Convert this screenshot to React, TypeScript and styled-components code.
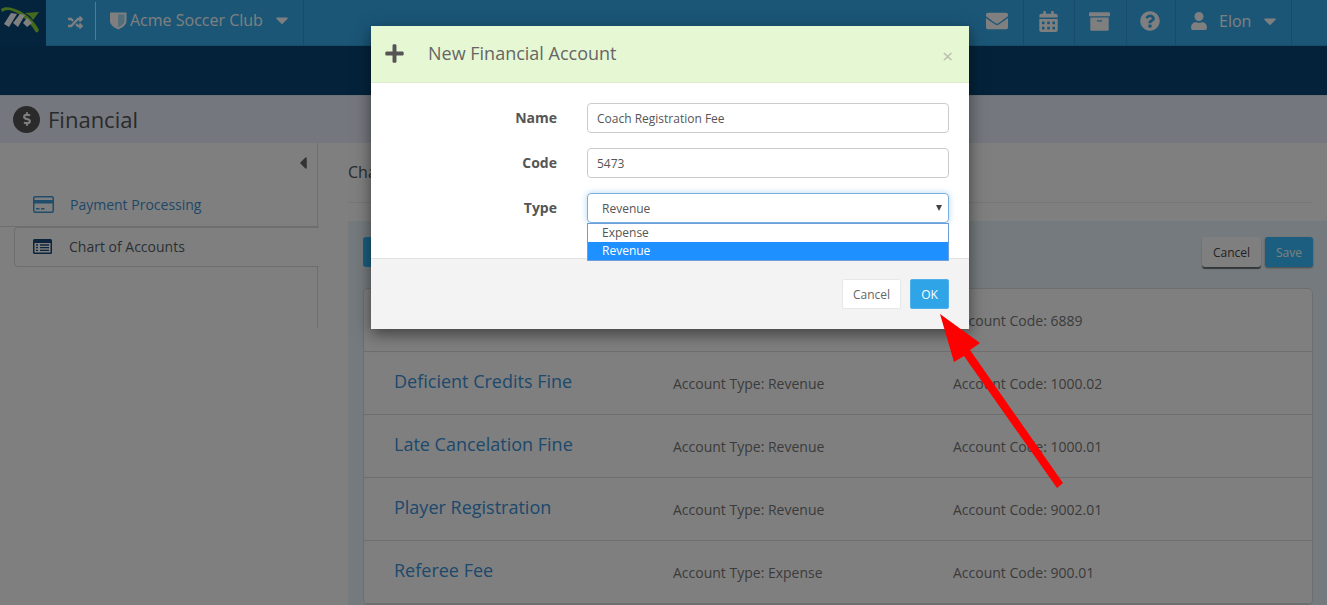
import React from 'react';
import styled, { createGlobalStyle } from 'styled-components';
import {
  FaArchive,
  FaCalendarAlt,
  FaCaretDown,
  FaCaretLeft,
  FaDollarSign,
  FaEnvelope,
  FaPlus,
  FaQuestionCircle,
  FaRandom,
  FaUser,
} from 'react-icons/fa';

const accounts = [
  { name: '', type: '', code: '6889' },
  { name: 'Deficient Credits Fine', type: 'Revenue', code: '1000.02' },
  { name: 'Late Cancelation Fine', type: 'Revenue', code: '1000.01' },
  { name: 'Player Registration', type: 'Revenue', code: '9002.01' },
  { name: 'Referee Fee', type: 'Expense', code: '900.01' },
];

const App = (): React.JSX.Element => {
  return (
    <Page>
      <GlobalStyle />
      <TopBar>
        <LogoBox>
          <svg width="46" height="46" viewBox="0 0 46 46">
            <path d="M1 9 C4 7 8 7 12 8 C24 11 34 20 39 30 C38 33 36 33 35 31 C29 21 19 12 9 10 C6 9.5 3 11 2 12 Z" fill="#8dd43a" />
            <path d="M4 24 L11 13 L17 14 L9 27 Z M13 23 L20 14 L25 15 L18 27 Z" fill="#fff" />
            <path d="M23 23 L27 18 L32 23 L27 27 Z" fill="#fff" />
            <path d="M25 13 L39 12 L33 20 L30 16 Z" fill="#8dd43a" />
          </svg>
        </LogoBox>
        <ShuffleButton>
          <FaRandom size={15} />
        </ShuffleButton>
        <ClubMenu>
          <svg width="17" height="19" viewBox="0 0 17 19">
            <path d="M0 1.5 H16.5 V10 C16.5 14 12 17 8.2 18.5 C4.5 17 0 14 0 10 Z" fill="#fff" />
            <path d="M8.2 3.5 H14.5 V10 C14.5 12.5 11 15 8.2 16.2 Z" fill="#36adee" opacity="0.45" />
          </svg>
          <ClubName>Acme Soccer Club</ClubName>
          <FaCaretDown size={20} />
        </ClubMenu>
        <NavSpacer />
        <NavIcon $width={52}>
          <FaEnvelope size={22} />
        </NavIcon>
        <NavIcon $width={51}>
          <FaCalendarAlt size={21} />
        </NavIcon>
        <NavIcon $width={52}>
          <FaArchive size={21} />
        </NavIcon>
        <NavIcon $width={49}>
          <FaQuestionCircle size={20} />
        </NavIcon>
        <UserMenu>
          <FaUser size={18} />
          <UserName>Elon</UserName>
          <FaCaretDown size={20} />
        </UserMenu>
      </TopBar>
      <Band />
      <PageHeader>
        <HeaderBadge>
          <FaDollarSign size={14} />
        </HeaderBadge>
        <PageTitle>Financial</PageTitle>
      </PageHeader>
      <Main>
        <Sidebar>
          <CollapseRow>
            <FaCaretLeft size={20} />
          </CollapseRow>
          <SideLink>
            <svg width="21" height="17" viewBox="0 0 21 17">
              <rect x="0.75" y="0.75" width="19.5" height="15.5" rx="1.5" fill="none" stroke="#3f9ad6" strokeWidth="1.5" />
              <rect x="1" y="4" width="19" height="3.5" fill="#3f9ad6" />
              <rect x="3" y="12" width="3.5" height="1.5" fill="#3f9ad6" />
              <rect x="8" y="12" width="3.5" height="1.5" fill="#3f9ad6" />
            </svg>
            <SideLabel $active={false}>Payment Processing</SideLabel>
          </SideLink>
          <SideActive>
            <svg width="19" height="15" viewBox="0 0 19 15">
              <rect width="19" height="15" rx="1.5" fill="#1b4a78" />
              <rect x="1.5" y="4" width="16" height="9.5" fill="#fff" />
              <path d="M3 6 H5 M7 6 H16 M3 8.7 H5 M7 8.7 H16 M3 11.4 H5 M7 11.4 H16" stroke="#1b4a78" strokeWidth="1.3" />
            </svg>
            <SideLabel $active>Chart of Accounts</SideLabel>
          </SideActive>
          <SideTail />
        </Sidebar>
        <Content>
          <ContentTitle>Chart of Accounts</ContentTitle>
          <Panel>
            <PanelToolbar>
              <AddButton>Add Account</AddButton>
              <ToolbarActions>
                <GreyButton>Cancel</GreyButton>
                <BlueButton>Save</BlueButton>
              </ToolbarActions>
            </PanelToolbar>
            <AccountList>
              {accounts.map((account) => (
                <AccountRow key={account.code}>
                  <AccountName>{account.name}</AccountName>
                  <AccountMeta>{account.type && `Account Type: ${account.type}`}</AccountMeta>
                  <AccountMeta>Account Code: {account.code}</AccountMeta>
                </AccountRow>
              ))}
            </AccountList>
          </Panel>
        </Content>
      </Main>

      <Backdrop />
      <Modal>
        <ModalHeader>
          <FaPlus size={21} />
          <ModalTitle>New Financial Account</ModalTitle>
          <CloseButton>×</CloseButton>
        </ModalHeader>
        <ModalBody>
          <FieldLabel>Name</FieldLabel>
          <TextInput>Coach Registration Fee</TextInput>
          <FieldLabel>Code</FieldLabel>
          <TextInput>5473</TextInput>
          <FieldLabel>Type</FieldLabel>
          <SelectWrap>
            <SelectBox>
              <span>Revenue</span>
              <SelectArrow />
            </SelectBox>
            <OptionList>
              <Option $selected={false}>Expense</Option>
              <Option $selected>Revenue</Option>
            </OptionList>
          </SelectWrap>
        </ModalBody>
        <ModalFooter>
          <CancelButton>Cancel</CancelButton>
          <OkButton>OK</OkButton>
        </ModalFooter>
      </Modal>

      <ArrowOverlay width="130" height="180" viewBox="0 0 130 180">
        <path d="M0 0 L40 29 L30 36 L123 169 L117 174 L24 42 L14 48 Z" fill="#fe0000" />
      </ArrowOverlay>
    </Page>
  );
};

const GlobalStyle = createGlobalStyle`
  html, body {
    margin: 0;
    height: 100%;
    overflow: hidden;
    background: #fff;
    font-family: 'Open Sans', 'Liberation Sans', sans-serif;
  }
  * {
    box-sizing: border-box;
  }
`;

const Page = styled.div`
  position: relative;
  width: 1327px;
  height: 605px;
  overflow: hidden;
  background: #fff;
`;

const TopBar = styled.header`
  height: 46px;
  display: flex;
  align-items: stretch;
  background: #36adee;
  border-bottom: 1px solid #2f9bd6;
  color: #fff;
`;

const LogoBox = styled.div`
  width: 46px;
  margin-bottom: -1px;
  background: #08477a;
`;

const ShuffleButton = styled.div`
  width: 50px;
  margin: 2px 0 5px;
  display: flex;
  align-items: center;
  justify-content: center;
  padding-top: 2px;
  padding-left: 9px;
  border-right: 1px solid rgba(255, 255, 255, 0.75);
`;

const ClubMenu = styled.div`
  width: 208px;
  display: flex;
  align-items: center;
  padding-left: 14px;
  padding-bottom: 5px;
  border-right: 1px solid #2f9bd6;
  svg:last-child {
    margin-left: 9px;
  }
`;

const ClubName = styled.span`
  margin-left: 3px;
  font-size: 16px;
  line-height: 1;
`;

const NavSpacer = styled.div`
  flex: 1;
`;

const NavIcon = styled.div<{ $width: number }>`
  width: ${(p) => p.$width}px;
  display: flex;
  align-items: center;
  justify-content: center;
  padding: 0 2px 3px 0;
  border-right: 1px solid #2f9bd6;
`;

const UserMenu = styled.div`
  width: 116px;
  margin-right: 35px;
  display: flex;
  align-items: center;
  padding-left: 14px;
  padding-bottom: 3px;
  border-right: 1px solid #2f9bd6;
`;

const UserName = styled.span`
  margin: 0 9px 0 11px;
  font-size: 16px;
`;

const Band = styled.div`
  height: 49px;
  background: #084676;
`;

const PageHeader = styled.div`
  height: 48px;
  display: flex;
  align-items: center;
  padding-left: 13px;
  background: #e8eefa;
  border-top: 1px solid #dde3ee;
`;

const HeaderBadge = styled.div`
  width: 27px;
  height: 27px;
  margin-bottom: 1px;
  border-radius: 50%;
  display: flex;
  align-items: center;
  justify-content: center;
  background: #555;
  color: #fff;
`;

const PageTitle = styled.h1`
  margin: 0 0 2px 8px;
  font-size: 22px;
  font-weight: 400;
  color: #555;
`;

const Main = styled.div`
  display: flex;
  background: #fff;
`;

const Sidebar = styled.aside`
  width: 318px;
  flex-shrink: 0;
  display: flex;
  flex-direction: column;
`;

const CollapseRow = styled.div`
  height: 42px;
  display: flex;
  justify-content: flex-end;
  padding: 10px 4px 0 0;
  color: #666;
  border-right: 1px solid #ddd;
`;

const SideLink = styled.div`
  height: 42px;
  display: flex;
  align-items: center;
  padding: 0 0 2px 33px;
  border-right: 1px solid #ddd;
  border-bottom: 1px solid #ddd;
`;

const SideActive = styled.div`
  height: 40px;
  margin-left: 14px;
  width: 305px;
  display: flex;
  align-items: center;
  padding: 0 0 2px 18px;
  background: #fff;
  border: 1px solid #ddd;
  border-right: 0;
  border-radius: 4px 0 0 4px;
`;

const SideLabel = styled.span<{ $active: boolean }>`
  margin-left: ${(p) => (p.$active ? '17px' : '16px')};
  font-size: 14px;
  color: ${(p) => (p.$active ? '#555f6b' : '#3f8fcf')};
`;

const SideTail = styled.div`
  height: 61px;
  border-right: 1px solid #ddd;
`;

const Content = styled.section`
  flex: 1;
  padding: 0 14px 0 30px;
`;

const ContentTitle = styled.h2`
  margin: 0 0 18px;
  height: 60px;
  padding-top: 18px;
  font-size: 16px;
  font-weight: 400;
  color: #555;
  border-bottom: 1px solid #eee;
`;

const Panel = styled.div`
  margin-right: -14px;
  padding: 16px 14px 0 15px;
  background: #e9f5fa;
`;

const PanelToolbar = styled.div`
  height: 51px;
  display: flex;
  justify-content: space-between;
  align-items: flex-start;
`;

const AddButton = styled.div`
  width: 120px;
  height: 30px;
  display: flex;
  align-items: center;
  justify-content: center;
  background: #37bcff;
  border-radius: 3px;
  color: #fff;
  font-size: 12px;
`;

const ToolbarActions = styled.div`
  display: flex;
  gap: 4px;
`;

const GreyButton = styled.div`
  width: 59px;
  height: 30px;
  display: flex;
  align-items: center;
  justify-content: center;
  border-radius: 3px;
  background: #fff;
  color: #444;
  font-size: 12px;
  box-shadow: 0 2px 1px rgba(0, 0, 0, 0.55);
`;

const BlueButton = styled(GreyButton)`
  width: 48px;
  background: #37bcff;
  color: #fff;
  box-shadow: 0 1px 2px rgba(0, 0, 0, 0.4);
`;

const AccountList = styled.div`
  background: #fff;
  border: 1px solid #ddd;
  border-radius: 5px;
`;

const AccountRow = styled.div`
  height: 63px;
  display: grid;
  grid-template-columns: 279px 280px 1fr;
  align-items: center;
  padding: 0 0 0 30px;
  border-bottom: 1px solid #ddd;
`;

const AccountName = styled.a`
  margin-bottom: 4px;
  font-size: 18px;
  color: #3a92d8;
`;

const AccountMeta = styled.span`
  font-size: 14px;
  color: #777;
`;

const Backdrop = styled.div`
  position: absolute;
  inset: 0;
  background: rgba(0, 0, 0, 0.5);
`;

const Modal = styled.div`
  position: absolute;
  left: 371px;
  top: 26px;
  width: 598px;
  height: 303px;
  display: flex;
  flex-direction: column;
  background: #fff;
  box-shadow: 0 5px 15px rgba(0, 0, 0, 0.5);
`;

const ModalHeader = styled.div`
  position: relative;
  height: 57px;
  display: flex;
  align-items: center;
  padding: 0 0 2px 13px;
  background: #e6f7d4;
  border-bottom: 1px solid #dcedc9;
  color: #555;
`;

const ModalTitle = styled.h3`
  margin: 0 0 0 23px;
  font-size: 18px;
  font-weight: 400;
  color: #666;
`;

const CloseButton = styled.span`
  position: absolute;
  right: 16px;
  top: 21px;
  font-size: 19px;
  line-height: 1;
  color: #b5bdae;
`;

const ModalBody = styled.div`
  height: 175px;
  display: grid;
  grid-template-columns: 186px 362px;
  grid-auto-rows: 30px;
  column-gap: 30px;
  row-gap: 15px;
  padding-top: 20px;
`;

const FieldLabel = styled.label`
  text-align: right;
  line-height: 30px;
  font-size: 14px;
  font-weight: 700;
  color: #555;
`;

const TextInput = styled.div`
  height: 30px;
  padding: 0 9px;
  line-height: 29px;
  font-size: 12px;
  color: #555;
  border: 1px solid #ccc;
  border-radius: 4px;
`;

const SelectWrap = styled.div`
  position: relative;
`;

const SelectBox = styled.div`
  height: 30px;
  display: flex;
  align-items: center;
  justify-content: space-between;
  padding: 0 6px 0 14px;
  font-size: 12px;
  color: #555;
  border: 1px solid #7aaedb;
  border-radius: 4px;
  box-shadow: 0 0 6px rgba(102, 175, 233, 0.5);
`;

const SelectArrow = styled.span`
  width: 0;
  height: 0;
  border-left: 3.5px solid transparent;
  border-right: 3.5px solid transparent;
  border-top: 6px solid #444;
`;

const OptionList = styled.div`
  position: absolute;
  left: 0;
  right: 0;
  top: 30px;
  z-index: 2;
  background: #fff;
  border: 1px solid #6e9fdc;
`;

const Option = styled.div<{ $selected: boolean }>`
  height: 18px;
  padding-left: 14px;
  line-height: 17px;
  font-size: 12px;
  color: ${(p) => (p.$selected ? '#fff' : '#555')};
  background: ${(p) => (p.$selected ? '#1e90ff' : '#fff')};
`;

const ModalFooter = styled.div`
  flex: 1;
  display: flex;
  justify-content: flex-end;
  align-items: flex-start;
  gap: 9px;
  padding: 20px 20px 0 0;
  background: #f3f3f3;
  border-top: 1px solid #e2e2e2;
`;

const CancelButton = styled.div`
  width: 59px;
  height: 30px;
  display: flex;
  align-items: center;
  justify-content: center;
  font-size: 12px;
  color: #666;
  background: #fff;
  border: 1px solid #e8e8e8;
  border-radius: 2px;
`;

const OkButton = styled(CancelButton)`
  width: 39px;
  color: #fff;
  background: #2fa4e7;
  border-color: #4fb0ea;
`;

const ArrowOverlay = styled.svg`
  position: absolute;
  left: 940px;
  top: 314px;
`;

export default App;
